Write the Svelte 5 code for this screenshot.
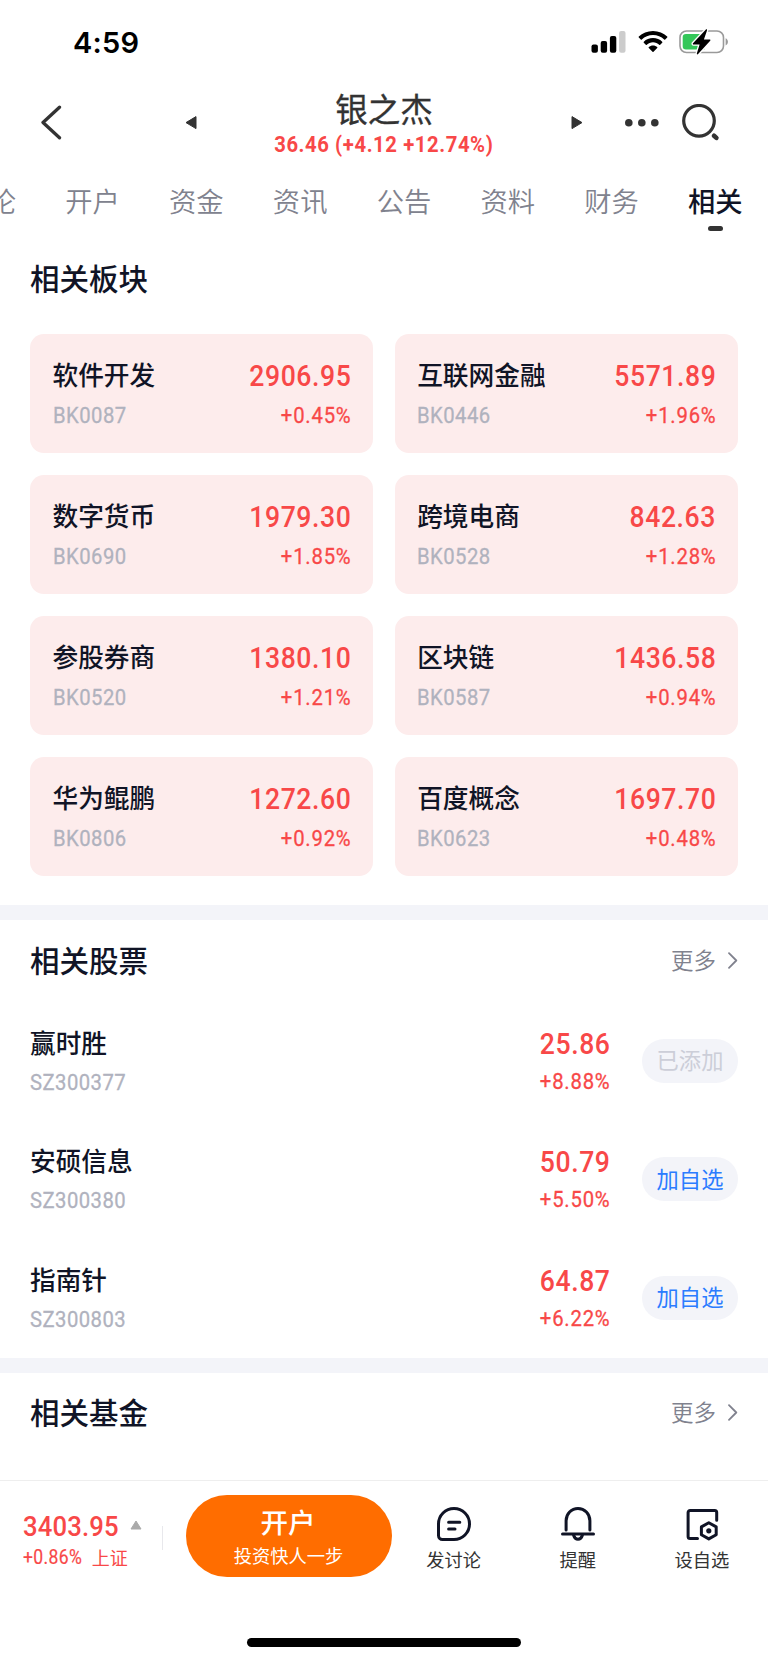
<script>
  const tabs = ['讨论', '开户', '资金', '资讯', '公告', '资料', '财务', '相关'];
  const boards = [
    ['软件开发', 'BK0087', '2906.95', '+0.45%'],
    ['互联网金融', 'BK0446', '5571.89', '+1.96%'],
    ['数字货币', 'BK0690', '1979.30', '+1.85%'],
    ['跨境电商', 'BK0528', '842.63', '+1.28%'],
    ['参股券商', 'BK0520', '1380.10', '+1.21%'],
    ['区块链', 'BK0587', '1436.58', '+0.94%'],
    ['华为鲲鹏', 'BK0806', '1272.60', '+0.92%'],
    ['百度概念', 'BK0623', '1697.70', '+0.48%']
  ];
  const stocks = [
    { name: '赢时胜', code: 'SZ300377', price: '25.86', change: '+8.88%', added: true },
    { name: '安硕信息', code: 'SZ300380', price: '50.79', change: '+5.50%', added: false },
    { name: '指南针', code: 'SZ300803', price: '64.87', change: '+6.22%', added: false }
  ];
</script>

{#snippet more()}
  <a class="more" href="#more">
    更多
    <svg width="11" height="18" viewBox="0 0 11 18"><path d="M2 2.200 9.300 9.500 2 16.800" fill="none" stroke="#80828e" stroke-width="1.800" stroke-linecap="round" stroke-linejoin="round" /></svg>
  </a>
{/snippet}

<div class="app">
  <div class="status">
    <span class="time">4:59</span>
    <div class="indicators">
      <svg width="35" height="24" viewBox="0 0 35 24">
        <rect x="0.5" y="14.5" width="6.4" height="8.2" rx="2" />
        <rect x="9.7" y="11" width="6.4" height="11.7" rx="2" />
        <rect x="18.9" y="6" width="6.4" height="16.7" rx="2" />
        <rect x="28.1" y="1" width="6.4" height="21.7" rx="2" fill="#ccc" />
      </svg>
      <svg class="wifi" width="30" height="24" viewBox="0 0 30 24">
        <path d="M15 .9C9.4.9 4.4 3 .8 6.5c-.3.3-.3.7 0 1l2 2c.3.3.7.3 1 0C6.800 6.700 10.700 5.100 15 5.100s8.200 1.600 11.200 4.400c.3.3.7.3 1 0l2-2c.3-.3.3-.7 0-1C25.600 3 20.600.9 15 .9Z" />
        <path d="M15 8.100c-3.600 0-6.800 1.400-9.200 3.600-.3.3-.3.7 0 1l2 2c.3.3.7.3 1 0 1.600-1.500 3.800-2.400 6.200-2.400s4.600.9 6.200 2.400c.3.3.7.3 1 0l2-2c.3-.3.3-.7 0-1-2.400-2.200-5.600-3.600-9.200-3.600Z" />
        <path d="M15 15.400c-1.600 0-3.100.6-4.200 1.500-.3.3-.3.7 0 1l3.700 3.900c.3.300.7.300 1 0l3.700-3.900c.3-.3.3-.7 0-1-1.100-.9-2.600-1.500-4.200-1.500Z" />
      </svg>
      <svg width="50" height="26" viewBox="0 0 50 26">
        <rect x="1" y="2" width="43.500" height="21.500" rx="6.500" fill="#fff" stroke="#9a9a9a" stroke-width="1.600" />
        <path d="M7 5h18.500v15.600H7a3.300 3.300 0 0 1-3.300-3.300V8.300A3.300 3.300 0 0 1 7 5Z" fill="#34c759" />
        <path d="M46.600 9.200c1.500.6 2.300 2 2.300 3.600s-.8 3-2.300 3.600Z" fill="#9a9a9a" />
        <path d="M26.700.7 14 14.200c-.5.600-.2 1.300.6 1.300h6L17.900 24.300c-.4 1 .6 1.500 1.200.8L31.200 11.800c.5-.6.2-1.300-.6-1.300h-5.700L28 1.500C28.300.5 27.400 0 26.700.7Z" stroke="#fff" stroke-width="2.600" paint-order="stroke" />
      </svg>
    </div>
  </div>

  <header>
    <svg class="back" width="22" height="36" viewBox="0 0 22 36"><path d="M19.500 2.200 3 17.500 19.500 32.800" fill="none" stroke="#333" stroke-width="3.300" stroke-linecap="round" stroke-linejoin="round" /></svg>
    <svg class="prev" width="12" height="14" viewBox="0 0 12 14"><path d="M11 .6v12L1 6.600Z" fill="#333" stroke="#333" stroke-linejoin="round" /></svg>
    <div class="heading">
      <h1>银之杰</h1>
      <p class="num">36.46 (+4.12 +12.74%)</p>
    </div>
    <svg class="next" width="12" height="14" viewBox="0 0 12 14"><path d="M1 .6v12L11 6.600Z" fill="#333" stroke="#333" stroke-linejoin="round" /></svg>
    <svg class="dots" width="34" height="8" viewBox="0 0 34 8" fill="#333"><circle cx="3.800" cy="3.800" r="3.800" /><circle cx="16.800" cy="3.800" r="3.800" /><circle cx="29.800" cy="3.800" r="3.800" /></svg>
    <svg class="search" width="38" height="38" viewBox="0 0 38 38" fill="none" stroke="#333"><circle cx="17" cy="16.800" r="15.300" stroke-width="3.200" /><path d="m32 31.700 2.400 2.200" stroke-width="4.600" stroke-linecap="round" /></svg>
  </header>

  <nav>
    {#each tabs as tab, i}
      <span class:active={i === tabs.length - 1}>{tab}</span>
    {/each}
  </nav>

  <section class="boards">
    <h2>相关板块</h2>
    <div class="grid">
      {#each boards as [name, code, value, change]}
        <article class="card">
          <div class="names">
            <span class="name">{name}</span>
            <span class="num code">{code}</span>
          </div>
          <div class="values">
            <span class="num value">{value}</span>
            <span class="num change">{change}</span>
          </div>
        </article>
      {/each}
    </div>
  </section>

  <section class="stocks">
    <div class="title-row"><h2>相关股票</h2>{@render more()}</div>
    {#each stocks as s}
      <div class="stock">
        <div class="names">
          <span class="name">{s.name}</span>
          <span class="num code">{s.code}</span>
        </div>
        <div class="values">
          <span class="num value">{s.price}</span>
          <span class="num change">{s.change}</span>
        </div>
        <button class:added={s.added}>{s.added ? '已添加' : '加自选'}</button>
      </div>
    {/each}
  </section>

  <section class="funds">
    <div class="title-row"><h2>相关基金</h2>{@render more()}</div>
  </section>

  <footer>
    <div class="index">
      <div class="index-top">
        <span class="num value">3403.95</span>
        <svg width="12" height="10" viewBox="0 0 12 10"><path d="M6 1 11 9H1Z" fill="#aaa" stroke="#aaa" stroke-linejoin="round" /></svg>
      </div>
      <div class="index-bottom"><span class="num">+0.86%</span><span>上证</span></div>
    </div>
    <i class="sep"></i>
    <div class="open"><strong>开户</strong><small>投资快人一步</small></div>
    <div class="actions">
      <div class="action">
        <svg width="36" height="36" viewBox="0 0 36 36" fill="none" stroke="#101426" stroke-width="3" stroke-linecap="round" stroke-linejoin="round">
          <path d="M2.500 18A15.500 15.500 0 1 1 18 33.500H6.500a4 4 0 0 1-4-4Z" />
          <path d="M12.600 16.300h11.200M12.600 23h6.400" />
        </svg>
        发讨论
      </div>
      <div class="action">
        <svg width="36" height="36" viewBox="0 0 36 36" fill="none" stroke="#101426" stroke-width="3" stroke-linecap="round">
          <path d="M6.100 24V14.700a11.900 12.200 0 0 1 23.800 0V24" />
          <path d="M2.500 28h31" />
          <path d="M13.600 29.300c.7 2.300 2.200 3.900 4.400 3.900s3.700-1.600 4.400-3.900" />
        </svg>
        提醒
      </div>
      <div class="action">
        <svg width="36" height="36" viewBox="0 0 36 36" fill="none" stroke="#101426" stroke-width="3" stroke-linecap="round" stroke-linejoin="round">
          <path d="M13.500 32.400H6.100a2 2 0 0 1-2-2V6.500a2 2 0 0 1 2-2h24.600a2 2 0 0 1 2 2v7.700" />
          <path d="m24.800 16.700 7.400 4.200v7.900l-7.400 4.100-7.400-4.100v-7.900Z" />
          <circle cx="24.800" cy="24.800" r="2.600" fill="#101426" stroke="none" />
        </svg>
        设自选
      </div>
    </div>
  </footer>
  <div class="home"><i></i></div>
</div>

<style>
  :global(body) { margin: 0; background: #fff; }
  .app { width: 768px; height: 1663px; overflow: hidden; display: flex; flex-direction: column; background: #fff; color: #101426; font-family: "Noto Sans CJK SC", sans-serif; box-sizing: border-box; }
  h1, h2, p { margin: 0; font-weight: 500; }
  svg { display: block; flex: none; }
  /* condensed numerals */
  .num { font-family: Roboto, "Noto Sans CJK SC", sans-serif; white-space: nowrap; transform: scaleX(.9); }

  .status { height: 84px; flex: none; display: flex; justify-content: space-between; padding: 0 39px 0 73px; }
  .time { font: 600 29px/85px Inter, sans-serif; letter-spacing: .2px; color: #000; }
  .indicators { display: flex; height: 84px; align-items: center; }
  .wifi { margin: 0 11px 0 12px; }

  header { height: 78px; flex: none; display: flex; align-items: center; padding-left: 40px; }
  .prev { margin-left: 123px; }
  .heading { width: 366px; box-sizing: border-box; padding-left: 8px; display: flex; flex-direction: column; align-items: center; }
  h1 { font-size: 32.500px; line-height: 36px; color: #333; font-weight: 400; -webkit-text-stroke: .3px #333; }
  .heading p { font-size: 22.500px; line-height: 26px; font-weight: 700; color: #f84848; margin-top: 5px; letter-spacing: .66px; }
  .next { margin-left: 8px; }
  .dots { margin-left: 42px; }
  .search { margin: 0 0 0 23px; }

  nav { height: 78px; flex: none; display: flex; gap: 49.200px; margin-left: -38.500px; }
  nav span { flex: none; font-size: 27.300px; line-height: 77px; color: #80828e; font-weight: 350; display: flex; flex-direction: column; align-items: center; }
  nav .active { color: #101426; font-weight: 500; }
  nav .active::after { content: ""; width: 15px; height: 5px; border-radius: 2.500px; background: #333; margin-top: -13px; }

  h2 { font-size: 29.500px; line-height: 40px; }
  .boards { height: 665px; flex: none; padding: 17px 30px 0; box-sizing: border-box; }
  .boards h2 { margin-bottom: 37px; }
  .grid { display: grid; grid-template-columns: 1fr 1fr; gap: 22px 21.400px; }
  .card { height: 119px; border-radius: 14px; background: #fdecec; display: flex; justify-content: space-between; padding: 0 22.500px; box-sizing: border-box; }
  .names { display: flex; flex-direction: column; align-items: flex-start; padding-top: 23px; }
  .values { display: flex; flex-direction: column; align-items: flex-end; padding-top: 25px; }
  .name { font-size: 25.700px; line-height: 34px; font-weight: 500; }
  .code { font-size: 22.500px; line-height: 34px; margin-top: 7px; color: #b0b2be; letter-spacing: .5px; transform-origin: left; -webkit-text-stroke: .3px #b0b2be; }
  .value { font-size: 29.500px; line-height: 34px; font-weight: 500; color: #f84848; letter-spacing: .65px; margin-right: -.65px; transform-origin: right; }
  .change { font-size: 22.500px; line-height: 34px; margin: 5px -1px 0 0; color: #f84848; letter-spacing: .9px; transform-origin: right; -webkit-text-stroke: .3px #f84848; }

  .stocks { border-top: 15px solid #f3f4f9; height: 453px; flex: none; box-sizing: border-box; padding: 19px 30px 0; }
  .title-row { display: flex; justify-content: space-between; align-items: center; height: 40px; }
  .more { display: flex; align-items: center; gap: 11px; color: #80828e; font-size: 22.500px; line-height: 40px; font-weight: 350; text-decoration: none; }
  .more svg { margin-top: 2px; }
  .stock { display: flex; height: 118.500px; }
  .stock:nth-of-type(2) { margin-top: 22px; }
  .stock .names { flex: 1; padding-top: 23.500px; }
  .stock .values { padding-top: 25.500px; }
  .stock .change { margin-top: 3px; }
  .stock .names .code { margin-top: 6px; }
  button { margin: 37.500px 0 0 32px; width: 96px; height: 44px; border: 0; border-radius: 22px; padding: 0 0 3px; background: #f3f4f9; color: #2b7cff; font: 400 22.300px/40px "Noto Sans CJK SC", sans-serif; }
  button.added { color: #ccced8; }

  .funds { border-top: 15px solid #f3f4f9; height: 122px; flex: none; box-sizing: border-box; padding: 18px 30px 0; }

  footer { height: 136px; flex: none; display: flex; border-top: 1px solid #eee; padding: 14px 4px 0 23px; box-sizing: border-box; }
  .index { width: 139px; flex: none; padding-top: 15px; color: #f84848; }
  .index-top { display: flex; align-items: center; gap: 10px; height: 34px; }
  .index-top .value { font-size: 28.500px; letter-spacing: .2px; transform-origin: left; margin-right: -10px; }
  .index-top svg { margin-top: -4px; }
  .index-bottom { display: flex; gap: 3px; font-size: 18px; line-height: 26px; }
  .index-bottom .num { font-size: 19.500px; line-height: 28px; transform-origin: left; letter-spacing: .4px; -webkit-text-stroke: .2px #f84848; }
  .sep { width: 1px; flex: none; height: 24px; background: #e8e8ec; margin: 31px 22.500px 0 0; }
  .open { width: 206px; height: 82px; flex: none; border-radius: 41px; background: #ff6d00; color: #fff; display: flex; flex-direction: column; align-items: center; }
  .open strong { font-size: 27.500px; font-weight: 500; line-height: 34px; margin: 9px 1px 0 0; }
  .open small { font-size: 18.300px; line-height: 26px; margin-top: 4px; }
  .actions { flex: 1; display: flex; }
  .action { flex: 1; display: flex; flex-direction: column; align-items: center; font-size: 18.300px; line-height: 26px; color: #333; padding-top: 11px; }
  .action svg { margin-bottom: 4px; }
  .home { height: 47px; display: flex; justify-content: center; align-items: flex-start; }
  .home i { width: 274px; height: 9px; border-radius: 4.500px; background: #000; margin-top: 22px; }
</style>
